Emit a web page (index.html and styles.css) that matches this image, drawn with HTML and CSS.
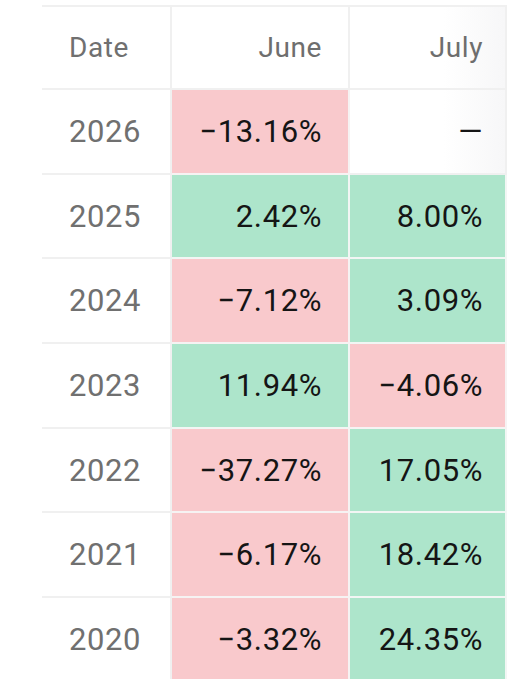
FILE: index.html
```html
<!DOCTYPE html>
<html>
<head>
<meta charset="utf-8">
<link rel="stylesheet" href="styles.css">
</head>
<body>
<div class="wrap">
  <table class="returns">
    <thead>
      <tr><th class="date">Date</th><th>June</th><th>July</th></tr>
    </thead>
    <tbody>
      <tr><td class="date">2026</td><td class="neg">−13.16%</td><td class="none">—</td></tr>
      <tr><td class="date">2025</td><td class="pos">2.42%</td><td class="pos">8.00%</td></tr>
      <tr><td class="date">2024</td><td class="neg">−7.12%</td><td class="pos">3.09%</td></tr>
      <tr><td class="date">2023</td><td class="pos">11.94%</td><td class="neg">−4.06%</td></tr>
      <tr><td class="date">2022</td><td class="neg">−37.27%</td><td class="pos">17.05%</td></tr>
      <tr><td class="date">2021</td><td class="neg">−6.17%</td><td class="pos">18.42%</td></tr>
      <tr><td class="date">2020</td><td class="neg">−3.32%</td><td class="pos">24.35%</td></tr>
    </tbody>
  </table>
</div>
</body>
</html>
```

FILE: styles.css
```css
html, body {
  margin: 0;
  padding: 0;
  background: #ffffff;
  overflow: hidden;
}
.wrap {
  padding: 5px 0 0 42px;
  font-family: "Roboto", "Helvetica Neue", Arial, sans-serif;
}
.returns {
  border-collapse: collapse;
  table-layout: fixed;
  width: 465px;
}
.returns th, .returns td {
  border: 2px solid #f0f0f0;
  padding: 0 26px 0 27px;
  text-align: right;
  white-space: nowrap;
  letter-spacing: 0.6px;
}
.returns tr > :first-child { border-left: none; }
.returns tr > :last-child { padding-right: 22px; }
.returns th {
  height: 81px;
  font-size: 28px;
  font-weight: 400;
  color: #6e6e6e;
}
.returns th:nth-child(1) { width: 75px; }
.returns th:nth-child(2) { width: 123px; }
.returns td {
  height: 82.7px;
  font-size: 31px;
  color: #151515;
}
.returns .date {
  text-align: left;
  color: #707070;
}
.returns td.neg { background: #f9c9cc; border-color: #f6f3f3; }
.returns td.pos { background: #ade5cb; border-color: #f2f6f4; }
.returns td.none { background: linear-gradient(90deg, #ffffff 60%, #f7f7f8); }
.returns th:last-child { background: linear-gradient(90deg, #ffffff 60%, #f7f7f8); }
```
